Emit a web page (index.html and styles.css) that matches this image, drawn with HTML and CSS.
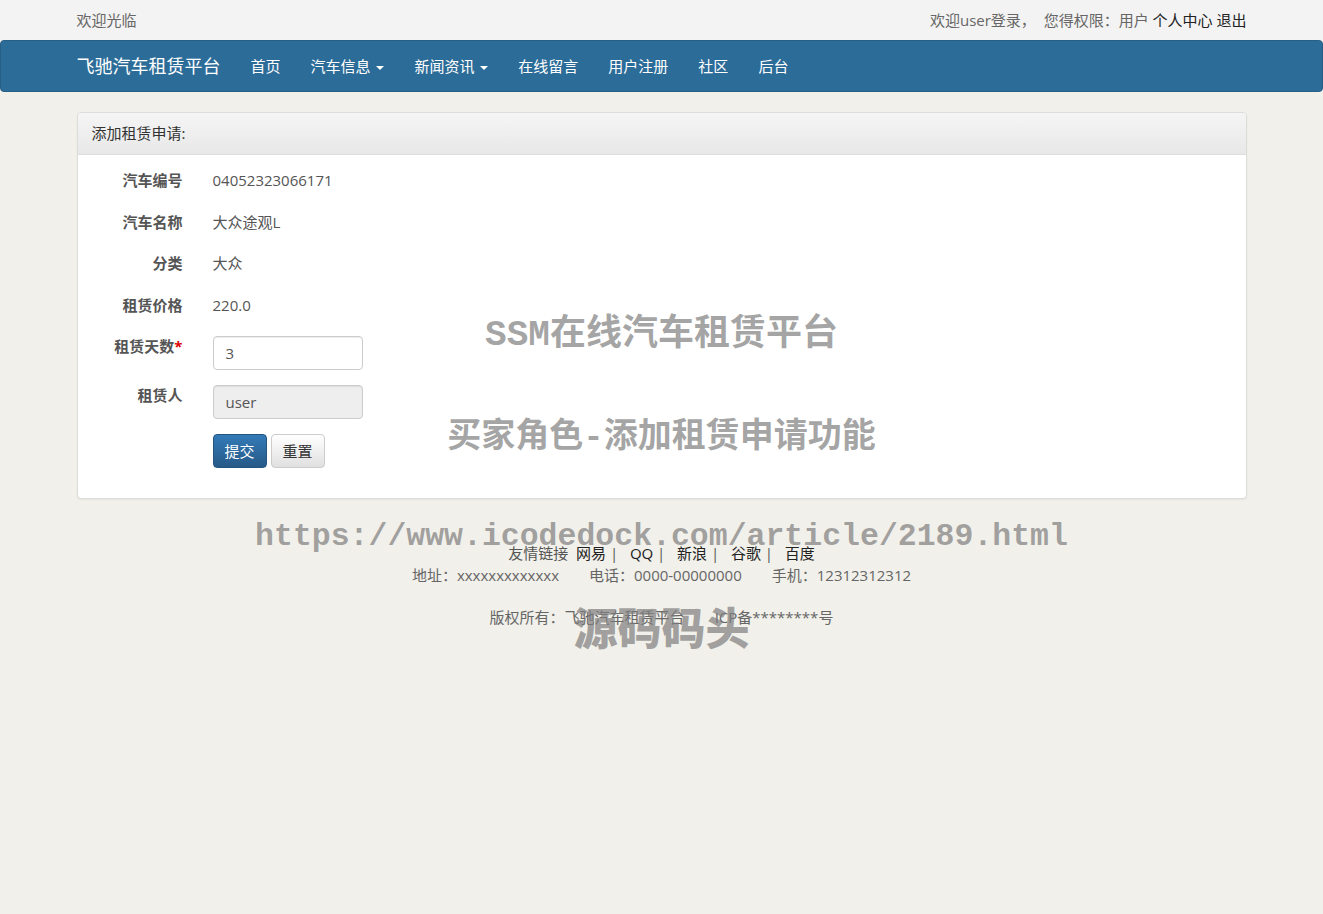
FILE: index.html
```html
<!DOCTYPE html>
<html lang="zh-CN">
<head>
<meta charset="utf-8">
<title>添加租赁申请</title>
<link rel="stylesheet" href="styles.css">
</head>
<body>
<div class="topbar">
  <div class="container topbar-inner">
    <span class="welcome">欢迎光临</span>
    <span class="userinfo">欢迎user登录，&nbsp;&nbsp;您得权限：用户 <a href="#">个人中心</a> <a href="#">退出</a></span>
  </div>
</div>
<nav class="navbar">
  <div class="container navbar-inner">
    <a class="brand" href="#">飞驰汽车租赁平台</a>
    <ul class="nav">
      <li><a href="#">首页</a></li>
      <li><a href="#">汽车信息 <span class="caret"></span></a></li>
      <li><a href="#">新闻资讯 <span class="caret"></span></a></li>
      <li><a href="#">在线留言</a></li>
      <li><a href="#">用户注册</a></li>
      <li><a href="#">社区</a></li>
      <li><a href="#">后台</a></li>
    </ul>
  </div>
</nav>
<main class="container">
  <section class="panel">
    <div class="panel-heading">添加租赁申请:</div>
    <div class="panel-body">
      <div class="row static"><label>汽车编号</label><div class="value">04052323066171</div></div>
      <div class="row static"><label>汽车名称</label><div class="value">大众途观L</div></div>
      <div class="row static"><label>分类</label><div class="value">大众</div></div>
      <div class="row static"><label>租赁价格</label><div class="value">220.0</div></div>
      <div class="row field"><label>租赁天数<span class="req">*</span></label><div class="value"><input class="input" type="text" value="3"></div></div>
      <div class="row field"><label>租赁人</label><div class="value"><input class="input" type="text" value="user" disabled></div></div>
      <div class="row field"><label></label><div class="value buttons"><button class="btn btn-primary">提交</button><button class="btn btn-default">重置</button></div></div>
    </div>
  </section>
</main>
<footer class="footer">
  <p class="links">友情链接&nbsp; <a href="#">网易</a> |&nbsp;&nbsp; <a href="#">QQ</a> |&nbsp;&nbsp; <a href="#">新浪</a> |&nbsp;&nbsp; <a href="#">谷歌</a> |&nbsp;&nbsp; <a href="#">百度</a></p>
  <p>地址：xxxxxxxxxxxxx<span class="sp"></span>电话：0000-00000000<span class="sp"></span>手机：12312312312</p>
  <p class="copy">版权所有：飞驰汽车租赁平台<span class="sp"></span>ICP备********号</p>
</footer>
<div class="watermarks">
  <div class="wm wm1">SSM在线汽车租赁平台</div>
  <div class="wm wm2">买家角色-添加租赁申请功能</div>
  <div class="wm wm3">https://www.icodedock.com/article/2189.html</div>
  <div class="wm wm4">源码码头</div>
</div>
</body>
</html>
```

FILE: styles.css
```css
* { box-sizing: border-box; }
html, body { margin: 0; padding: 0; }
body {
  background: #f1f0ea;
  font-family: "Open Sans", "Noto Sans CJK SC", sans-serif;
  font-size: 15px;
  line-height: 20px;
  color: #555;
  position: relative;
  min-height: 914px;
}
a { text-decoration: none; color: #333; }
.container { width: 1170px; margin: 0 auto; }

.topbar { background: #f3f3f3; height: 40px; }
.topbar-inner { display: flex; justify-content: space-between; align-items: center; height: 40px; font-size: 15px; color: #666; }
.userinfo a { color: #222; }

.navbar {
  background: #2c6c98;
  border: 1px solid #285f87;
  border-radius: 4px;
  height: 52px;
  margin-bottom: 20px;
}
.navbar-inner { display: flex; align-items: center; height: 50px; }
.brand { color: #fff; font-size: 18px; line-height: 20px; padding: 15px 15px 15px 0; }
.nav { display: flex; list-style: none; margin: 0; padding: 0; }
.nav a { display: block; color: #fff; font-size: 15px; padding: 15px; line-height: 20px; }
.caret {
  display: inline-block; width: 0; height: 0; margin-left: 2px; vertical-align: middle;
  border-top: 4px solid #fff; border-left: 4px solid transparent; border-right: 4px solid transparent;
}

.panel { background: #fff; border: 1px solid #dcdcdc; border-radius: 4px; box-shadow: 0 1px 2px rgba(0,0,0,.05); }
.panel-heading {
  height: 42px; padding: 10px 14px; line-height: 20px; color: #333; font-size: 15px;
  background: linear-gradient(#f5f5f5, #e8e8e8);
  border-bottom: 1px solid #ddd; border-radius: 3px 3px 0 0;
}
.panel-body { padding: 15px 15px 15px; }
.row { display: flex; }
.row label { width: 90px; flex: none; text-align: right; font-weight: bold; color: #555; line-height: 20px; margin-right: 15px; }
.row .value { margin-left: 15px; }
.static { margin-bottom: 21.5px; line-height: 20px; }
.field { margin-bottom: 15px; }
.req { color: #d00; }
.input {
  width: 150px; height: 34px; padding: 6px 12px; font: inherit; font-size: 15px; color: #555;
  border: 1px solid #ccc; border-radius: 4px; background: #fff;
  box-shadow: inset 0 1px 1px rgba(0,0,0,.075);
}
.input:disabled { background: #eee; }
.buttons { display: flex; gap: 4px; }
.btn { height: 34px; padding: 6px 11px; font: inherit; font-size: 15px; border-radius: 4px; line-height: 20px; }
.btn-primary { color: #fff; background: linear-gradient(#337ab7, #265a88); border: 1px solid #245580; }
.btn-default { color: #333; background: linear-gradient(#fff, #e0e0e0); border: 1px solid #ccc; }

.footer { text-align: center; color: #666; padding-top: 43px; }
.footer p { margin: 0; line-height: 22px; }
.footer .copy { margin-top: 20px; }
.sp { display: inline-block; width: 30px; }
.links a { color: #222; }
.links { color: #555; }

.watermarks { position: absolute; top: 0; left: 0; right: 0; pointer-events: none; }
.wm {
  position: absolute; left: 0; right: 0; text-align: center; font-weight: bold;
  color: rgba(125,125,125,0.7);
  font-family: "Liberation Mono", "Noto Sans CJK SC", monospace;
  white-space: nowrap;
}
.wm1 { top: 315px; font-size: 36px; line-height: 42px; }
.wm2 { top: 417px; font-size: 34px; line-height: 42px; }
.wm3 { top: 517px; font-size: 31.5px; line-height: 40px; }
.wm4 { top: 601px; font-size: 44px; line-height: 50px; font-family: "Noto Sans CJK SC", sans-serif; font-weight: 900; }
```
